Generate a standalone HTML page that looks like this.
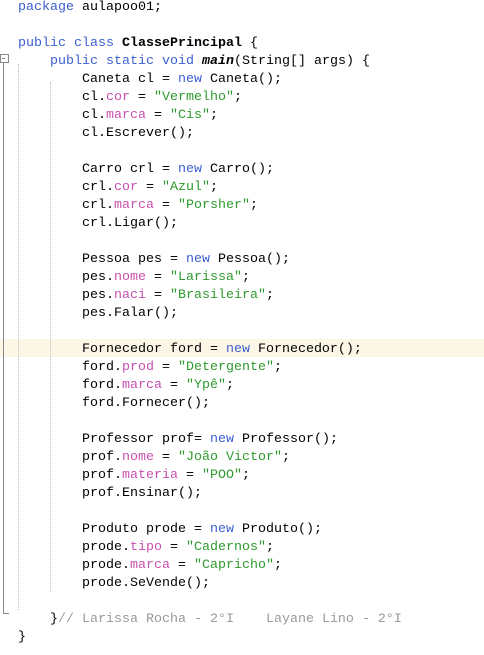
<!DOCTYPE html>
<html><head><meta charset="utf-8"><style>
body{margin:0;width:484px;height:655px;background:#fff;position:relative;overflow:hidden}
pre{position:absolute;left:18px;top:-1px;margin:0;font:13.33px/18px "Liberation Mono",monospace;color:#000}
.k{color:#3c5fd0}.f{color:#c850b0}.s{color:#2e9a2e}.c{color:#999}
.m{font-weight:bold;font-style:italic}
.hl{position:absolute;left:0;top:339px;width:484px;height:18px;background:#fcf6e6}
.g{position:absolute;top:64px;height:546px;border-left:1px dotted #bbb}
</style></head><body>
<div class="hl"></div>
<div class="g" style="left:18px"></div>
<div class="g" style="left:50px;top:82px;height:510px"></div>
<div style="position:absolute;left:0;top:54px;width:7px;height:7px;border:1px solid #888;background:#fff"></div>
<div style="position:absolute;left:2px;top:58px;width:3px;height:1px;background:#888"></div>
<div style="position:absolute;left:3px;top:63px;width:5px;height:550px;border-left:1px solid #888;border-bottom:1px solid #888"></div>
<pre><span class="k">package</span> aulapoo01;

<span class="k">public class</span> <b>ClassePrincipal</b> {
    <span class="k">public static void</span> <span class="m">main</span>(String[] args) {
        Caneta cl = <span class="k">new</span> Caneta();
        cl.<span class="f">cor</span> = <span class="s">"Vermelho"</span>;
        cl.<span class="f">marca</span> = <span class="s">"Cis"</span>;
        cl.Escrever();

        Carro crl = <span class="k">new</span> Carro();
        crl.<span class="f">cor</span> = <span class="s">"Azul"</span>;
        crl.<span class="f">marca</span> = <span class="s">"Porsher"</span>;
        crl.Ligar();

        Pessoa pes = <span class="k">new</span> Pessoa();
        pes.<span class="f">nome</span> = <span class="s">"Larissa"</span>;
        pes.<span class="f">naci</span> = <span class="s">"Brasileira"</span>;
        pes.Falar();

        Fornecedor ford = <span class="k">new</span> Fornecedor();
        ford.<span class="f">prod</span> = <span class="s">"Detergente"</span>;
        ford.<span class="f">marca</span> = <span class="s">"Ypê"</span>;
        ford.Fornecer();

        Professor prof= <span class="k">new</span> Professor();
        prof.<span class="f">nome</span> = <span class="s">"João Victor"</span>;
        prof.<span class="f">materia</span> = <span class="s">"POO"</span>;
        prof.Ensinar();

        Produto prode = <span class="k">new</span> Produto();
        prode.<span class="f">tipo</span> = <span class="s">"Cadernos"</span>;
        prode.<span class="f">marca</span> = <span class="s">"Capricho"</span>;
        prode.SeVende();

    }<span class="c">// Larissa Rocha - 2°I    Layane Lino - 2°I</span>
}</pre>
</body></html>
